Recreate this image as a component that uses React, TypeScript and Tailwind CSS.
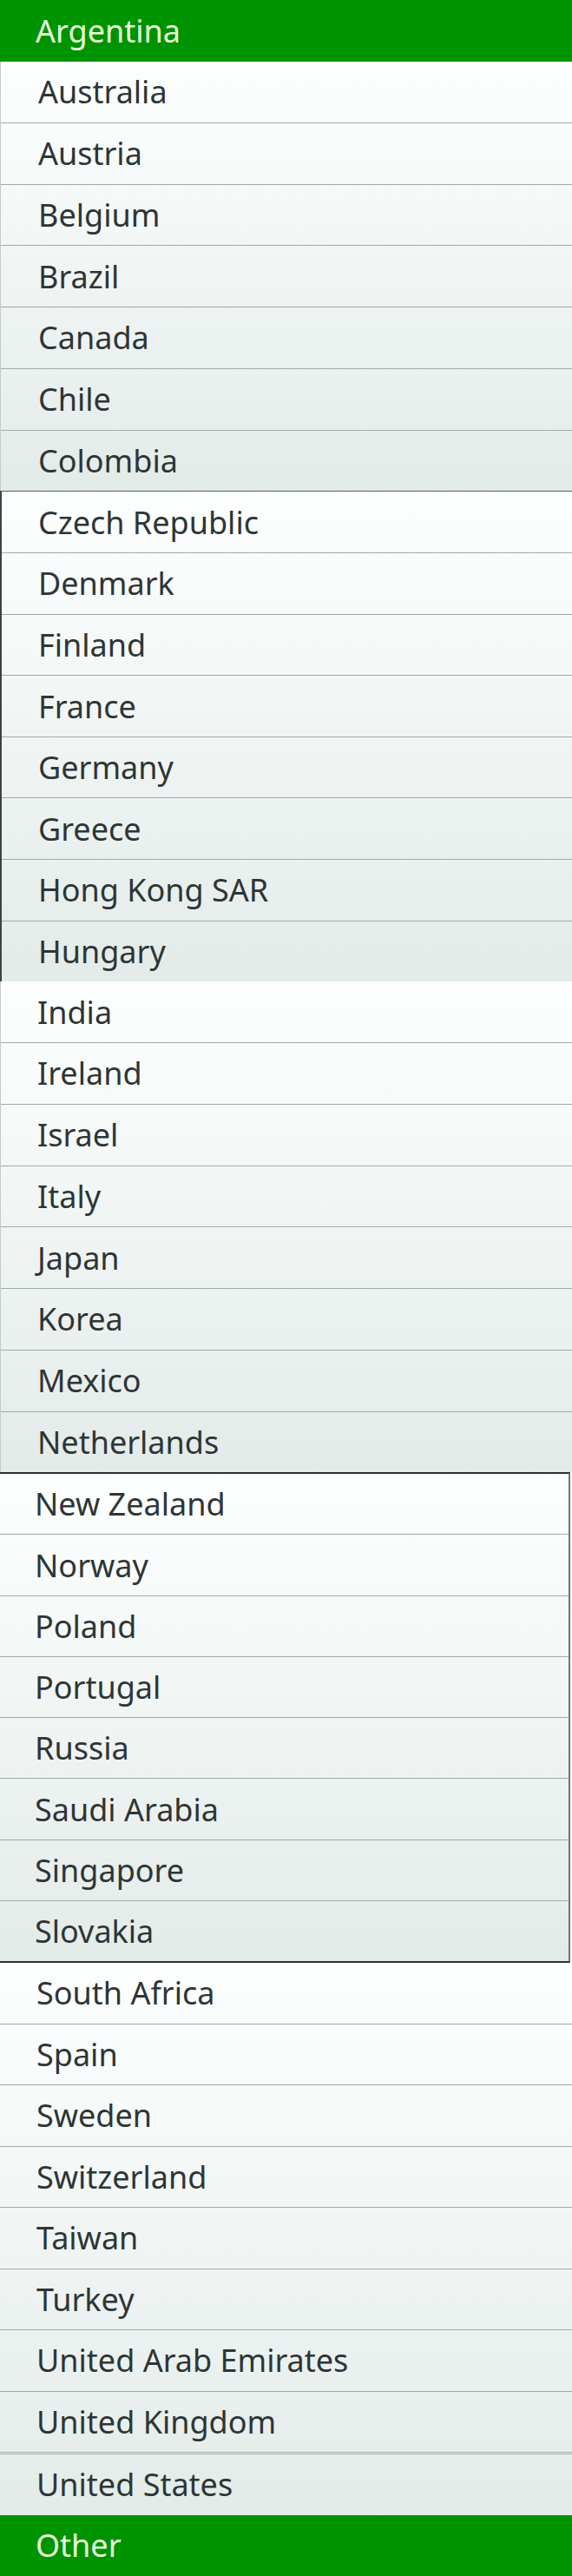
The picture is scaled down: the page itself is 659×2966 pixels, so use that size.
const groups: { items: string[]; box: string; pad: string }[] = [
  {
    items: ['Australia', 'Austria', 'Belgium', 'Brazil', 'Canada', 'Chile', 'Colombia'],
    box: 'border-l border-[#c3cccb]',
    pad: 'pl-[43px]',
  },
  {
    items: ['Czech Republic', 'Denmark', 'Finland', 'France', 'Germany', 'Greece', 'Hong Kong SAR', 'Hungary'],
    box: 'border-l-2 border-l-[#3d4443] border-t border-t-[#56605f]',
    pad: 'pl-[42px]',
  },
  {
    items: ['India', 'Ireland', 'Israel', 'Italy', 'Japan', 'Korea', 'Mexico', 'Netherlands'],
    box: 'border-l border-[#c3cccb]',
    pad: 'pl-[42px]',
  },
  {
    items: ['New Zealand', 'Norway', 'Poland', 'Portugal', 'Russia', 'Saudi Arabia', 'Singapore', 'Slovakia'],
    box: 'border-y-2 border-y-[#2b3130] border-r-2 border-r-[#6c7574] mr-[2px]',
    pad: 'pl-[40px]',
  },
  {
    items: [
      'South Africa',
      'Spain',
      'Sweden',
      'Switzerland',
      'Taiwan',
      'Turkey',
      'United Arab Emirates',
      'United Kingdom',
      'United States',
    ],
    box: '',
    pad: 'pl-[42px]',
  },
]

function GreenRow({ label }: { label: string }) {
  return (
    <div className="flex-1 flex items-center bg-[#009300] pl-[41px]">
      <span className="text-[36px] text-[#e9ffdc] leading-none">{label}</span>
    </div>
  )
}

export default function App() {
  return (
    <div
      className="w-[659px] h-[2966px] flex flex-col bg-white"
      style={{ fontFamily: '"Noto Sans", "Open Sans", sans-serif' }}
    >
      <div className="h-[71px] flex">
        <GreenRow label="Argentina" />
      </div>
      {groups.map((g, gi) => (
        <div
          key={gi}
          className={`flex flex-col bg-gradient-to-b from-[#fdffff] to-[#e3ebe9] ${g.box}`}
          style={{ height: `${(2966 / 42) * g.items.length}px` }}
        >
          {g.items.map((name, i) => (
            <div
              key={name}
              className={`flex-1 flex items-center ${g.pad} pt-[1px] ${
                i < g.items.length - 1 ? 'border-b border-[#9fabaa]' : ''
              } ${name === 'United Kingdom' ? 'border-b-[3px] border-double' : ''}`}
            >
              <span className="text-[36px] text-[#2e3535] leading-none">{name}</span>
            </div>
          ))}
        </div>
      ))}
      <div className="flex-1 flex">
        <GreenRow label="Other" />
      </div>
    </div>
  )
}
